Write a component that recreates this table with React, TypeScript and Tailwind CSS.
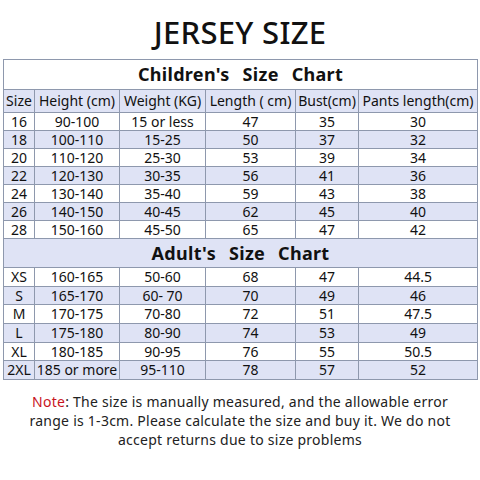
const kids = [
  ['16', '90-100', '15 or less', '47', '35', '30'],
  ['18', '100-110', '15-25', '50', '37', '32'],
  ['20', '110-120', '25-30', '53', '39', '34'],
  ['22', '120-130', '30-35', '56', '41', '36'],
  ['24', '130-140', '35-40', '59', '43', '38'],
  ['26', '140-150', '40-45', '62', '45', '40'],
  ['28', '150-160', '45-50', '65', '47', '42'],
];

const adults = [
  ['XS', '160-165', '50-60', '68', '47', '44.5'],
  ['S', '165-170', '60- 70', '70', '49', '46'],
  ['M', '170-175', '70-80', '72', '51', '47.5'],
  ['L', '175-180', '80-90', '74', '53', '49'],
  ['XL', '180-185', '90-95', '76', '55', '50.5'],
  ['2XL', '185 or more', '95-110', '78', '57', '52'],
];

const headers = ['Size', 'Height (cm)', 'Weight (KG)', 'Length ( cm)', 'Bust(cm)', 'Pants length(cm)'];

function Rows({ rows, rowH }: { rows: string[][]; rowH: string }) {
  return (
    <>
      {rows.map((r, i) => (
        <tr key={r[0]} className={i % 2 === 1 ? 'bg-[#dfe3f5]' : 'bg-white'}>
          {r.map((c, j) => (
            <td key={j} className={`border border-[#8e98ad] p-0 text-center leading-none ${rowH}`}>
              {c}
            </td>
          ))}
        </tr>
      ))}
    </>
  );
}

export default function App() {
  return (
    <div className="w-[480px] h-[480px] bg-white text-[#111] font-['Noto_Sans',sans-serif]">
      {/* Title */}
      <div className="h-[59px] flex items-center justify-center pt-[6px]">
        <h1 className="text-[31px] font-medium leading-none tracking-[0.3px]">JERSEY SIZE</h1>
      </div>

      <table className="ml-[3px] w-[474px] table-fixed border-collapse text-[14px]">
        <colgroup>
          <col className="w-[31px]" />
          <col className="w-[85px]" />
          <col className="w-[86px]" />
          <col className="w-[90px]" />
          <col className="w-[63px]" />
          <col className="w-[119px]" />
        </colgroup>
        <tbody>
          <tr className="bg-white">
            <td colSpan={6} className="h-[30px] border border-[#8e98ad] p-0 text-center text-[18px] font-bold tracking-[0.3px] [word-spacing:8px]">
              Children's Size Chart
            </td>
          </tr>
          <tr className="bg-[#dfe3f5]">
            {headers.map((h) => (
              <td key={h} className="h-[23px] border border-[#8e98ad] p-0 text-center whitespace-nowrap leading-none">
                {h}
              </td>
            ))}
          </tr>
          <Rows rows={kids} rowH="h-[18px]" />
          <tr className="bg-[#dfe3f5]">
            <td colSpan={6} className="h-[29px] border border-[#8e98ad] p-0 text-center text-[18px] font-bold tracking-[0.3px] [word-spacing:8px]">
              Adult's Size Chart
            </td>
          </tr>
          <Rows rows={adults} rowH="h-[18.7px]" />
        </tbody>
      </table>

      {/* Note */}
      <p className="mt-[12px] text-center text-[14px] leading-[19px] tracking-[0.25px] text-[#222]">
        <span className="text-[#c8141e]">Note</span>: The size is manually measured, and the allowable error
        <br />
        range is 1-3cm. Please calculate the size and buy it. We do not
        <br />
        accept returns due to size problems
      </p>
    </div>
  );
}
